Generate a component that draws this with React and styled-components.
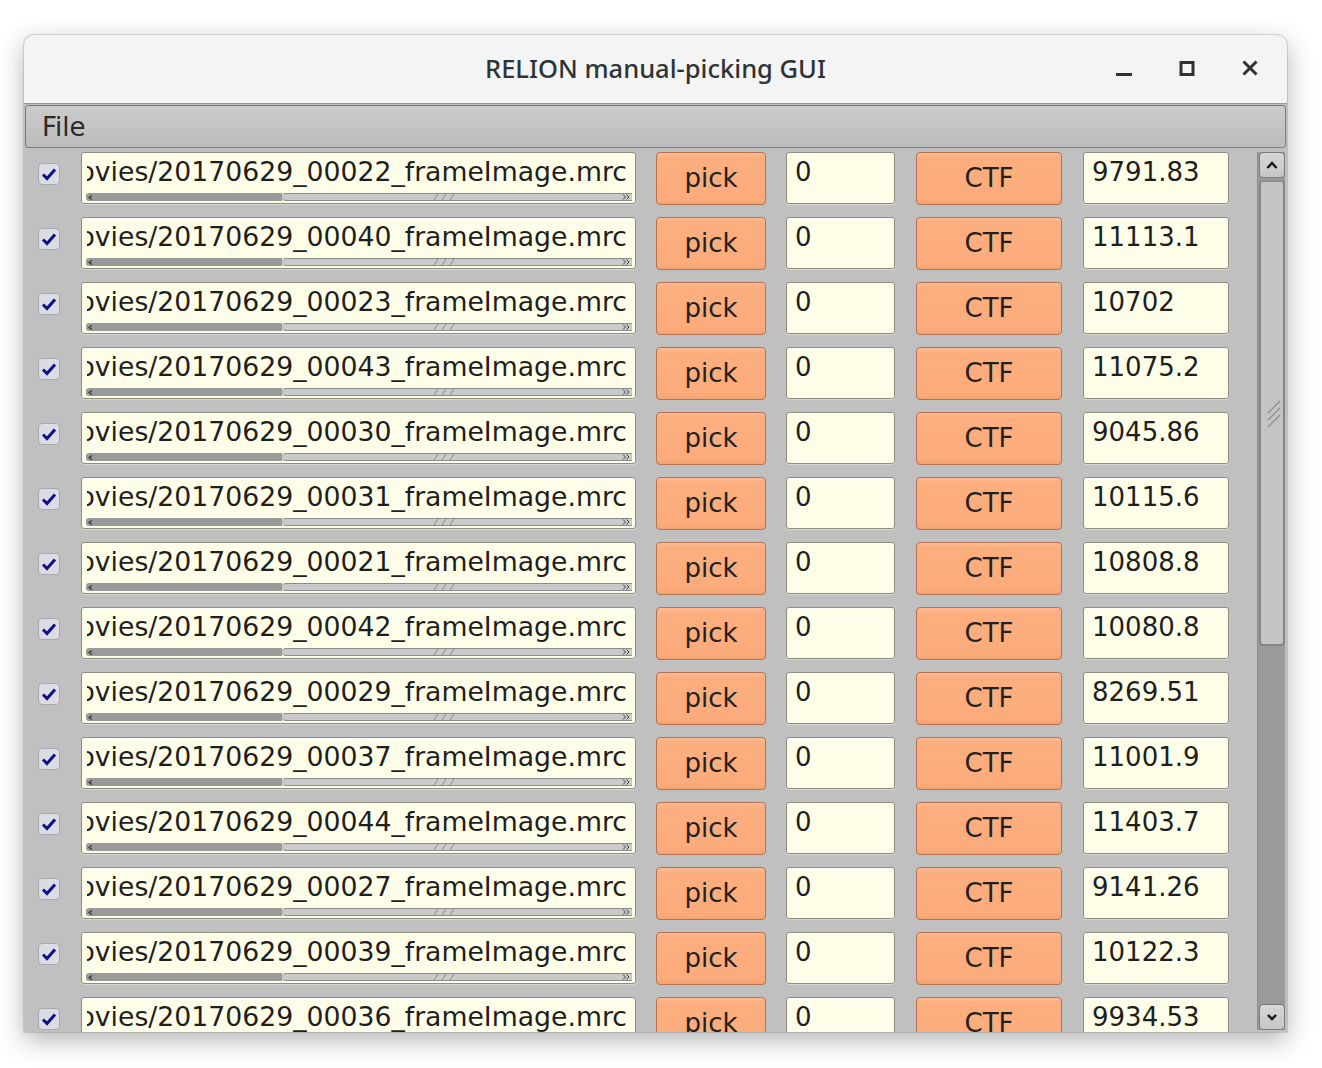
import React from 'react'
import styled, { createGlobalStyle } from 'styled-components'

const GlobalStyle = createGlobalStyle`
  html, body {
    margin: 0;
    padding: 0;
    background: #ffffff;
  }
  body {
    font-family: "DejaVu Sans", "Liberation Sans", sans-serif;
    width: 1322px;
    height: 1068px;
    overflow: hidden;
  }
`

const Window = styled.div`
  margin: 35px 0 0 24px;
  width: 1263px;
  height: 997px;
  display: flex;
  flex-direction: column;
  border-radius: 10px 10px 0 0;
  box-shadow: 0 8px 26px rgba(0, 0, 0, 0.3), 0 0 0 1px rgba(0, 0, 0, 0.12);
  overflow: hidden;
  background: #c0c0c0;
`

const TitleBar = styled.div`
  height: 68px;
  flex: none;
  background: #f4f4f4;
  border-bottom: 1px solid #9a9a9a;
  display: flex;
  align-items: center;
  justify-content: center;
  position: relative;
`

const Title = styled.div`
  font-family: "Noto Sans", "DejaVu Sans", sans-serif;
  font-weight: 500;
  font-size: 25.5px;
  color: #2e3436;
  margin-bottom: 3px;
`

const Controls = styled.div`
  position: absolute;
  right: 26px;
  top: 0;
  bottom: 0;
  display: flex;
  align-items: center;
  gap: 41px;
`

const ControlIcon = styled.svg`
  width: 22px;
  height: 22px;
  display: block;
`

const MenuBar = styled.div`
  height: 43px;
  flex: none;
  margin: 1px 1px 0;
  background: linear-gradient(#cbcbcb, #bdbdbd);
  border: 1px solid #7c7c7c;
  border-radius: 3px;
  display: flex;
  align-items: center;
  padding-left: 16px;
  box-sizing: border-box;
`

const MenuItem = styled.span`
  font-size: 26px;
  color: #2a2a2a;
`

const Body = styled.div`
  flex: 1;
  display: flex;
  overflow: hidden;
  min-height: 0;
`

const Rows = styled.div`
  flex: 1;
  display: flex;
  flex-direction: column;
  gap: 13px;
  padding: 4px 0 0 14px;
`

const Row = styled.div`
  display: flex;
  align-items: stretch;
  height: 52px;
  flex: none;
`

const Check = styled.div`
  width: 22px;
  height: 22px;
  margin-top: 11px;
  margin-right: 21px;
  box-sizing: border-box;
  border: 1px solid #a8a8b0;
  border-radius: 4px;
  background: #dcdce4;
  display: flex;
  align-items: center;
  justify-content: center;
`

const Field = styled.div`
  width: ${p => p.$w}px;
  margin-right: ${p => p.$mr}px;
  box-sizing: border-box;
  background: #fefee8;
  border: 1px solid #8e8e80;
  border-radius: 3px;
  box-shadow: inset 0 1px 0 #ffffff, 0 1px 0 #d6d6d6;
  display: flex;
  flex-direction: column;
  overflow: hidden;
`

const FieldText = styled.div`
  font-size: 26px;
  color: #1e1e1e;
  line-height: 1;
  padding: 6px 8px 0 8px;
  white-space: nowrap;
  flex: 1;
`

const PathClip = styled.div`
  flex: 1;
  margin: 6px 8px 0 5px;
  overflow: hidden;
  display: flex;
  justify-content: flex-end;
  white-space: nowrap;
  font-size: 26.7px;
  line-height: 1;
  color: #1e1e1e;
`

const HScroll = styled.div`
  height: 8px;
  margin: 0 3px 2px 4px;
  display: flex;
  align-items: stretch;
  flex: none;
`

const HThumb = styled.div`
  width: 194px;
  background: #9a9a9a;
  border-radius: 3px 0 0 3px;
  display: flex;
  align-items: center;
  padding-left: 2px;
`

const HTrack = styled.div`
  flex: 1;
  background: #cacaca;
  border-top: 1px solid #8c8c8c;
  border-bottom: 1px solid #8c8c8c;
  border-radius: 4px 0 0 4px;
  display: flex;
  align-items: center;
  justify-content: space-between;
  padding: 0 2px 0 150px;
`

const Button = styled.div`
  width: ${p => p.$w}px;
  margin-right: ${p => p.$mr}px;
  height: 53px;
  box-sizing: border-box;
  background: linear-gradient(#fdbb92 0, #fcae7e 10%, #fcac7c 90%, #f3a271 100%);
  border: 1px solid #b47253;
  border-radius: 4px;
  display: flex;
  align-items: center;
  justify-content: center;
  font-size: 26px;
  color: #222;
  padding-bottom: 2px;
`

const VScroll = styled.div`
  width: 26px;
  margin: 4px 2px 2px 0;
  display: flex;
  flex-direction: column;
  align-items: stretch;
  border-left: 1px solid #8e8e8e;
  padding-left: 1px;
  background: #9a9a9a;
`

const ArrowBtn = styled.div`
  height: 26px;
  flex: none;
  box-sizing: border-box;
  background: linear-gradient(#d6d6d6, #c6c6c6);
  border: 1px solid #7a7a7a;
  border-radius: 4px;
  display: flex;
  align-items: center;
  justify-content: center;
`

const VThumb = styled.div`
  height: 466px;
  margin-top: 2px;
  flex: none;
  box-sizing: border-box;
  background: #c4c4c4;
  border: 2px solid #858585;
  border-top-color: #909090;
  border-radius: 4px;
  display: flex;
  align-items: center;
  justify-content: flex-end;
  padding-right: 2px;
`

const VTrack = styled.div`
  flex: 1;
`

const rows = [
  ['00022', '9791.83'],
  ['00040', '11113.1'],
  ['00023', '10702'],
  ['00043', '11075.2'],
  ['00030', '9045.86'],
  ['00031', '10115.6'],
  ['00021', '10808.8'],
  ['00042', '10080.8'],
  ['00029', '8269.51'],
  ['00037', '11001.9'],
  ['00044', '11403.7'],
  ['00027', '9141.26'],
  ['00039', '10122.3'],
  ['00036', '9934.53'],
]

const CheckMark = () => (
  <svg width="16" height="14" viewBox="0 0 16 14">
    <path d="M2 7.5 L6 11.5 L14 2.5" fill="none" stroke="#10108c" strokeWidth="3" strokeLinejoin="miter" />
  </svg>
)

const Grip = ({ vertical }) => (
  <svg width={vertical ? 14 : 26} height={vertical ? 40 : 6} viewBox={vertical ? '0 0 14 40' : '0 0 26 6'}>
    {vertical ? (
      <g stroke="#8a8a8a" strokeWidth="1.2">
        <path d="M1 20 L13 8" />
        <path d="M1 27 L13 15" />
        <path d="M1 34 L13 22" />
      </g>
    ) : (
      <g stroke="#8a8a8a" strokeWidth="1">
        <path d="M2 6 L6 0" />
        <path d="M10 6 L14 0" />
        <path d="M18 6 L22 0" />
      </g>
    )}
  </svg>
)

const FileRow = ({ id, value }) => (
  <Row>
    <Check>
      <CheckMark />
    </Check>
    <Field $w={555} $mr={20}>
      <PathClip>
        <span>{`movies/20170629_${id}_frameImage.mrc`}</span>
      </PathClip>
      <HScroll>
        <HThumb>
          <svg width="5" height="5" viewBox="0 0 5 5">
            <path d="M4 0.5 L1 2.5 L4 4.5" fill="none" stroke="#333" strokeWidth="1.2" />
          </svg>
        </HThumb>
        <HTrack>
          <Grip />
          <svg width="8" height="6" viewBox="0 0 8 6">
            <path d="M1 0.5 L3.5 3 L1 5.5 M4.5 0.5 L7 3 L4.5 5.5" fill="none" stroke="#444" strokeWidth="1" />
          </svg>
        </HTrack>
      </HScroll>
    </Field>
    <Button $w={110} $mr={20}>pick</Button>
    <Field $w={109} $mr={21}>
      <FieldText>0</FieldText>
    </Field>
    <Button $w={146} $mr={21}>CTF</Button>
    <Field $w={146} $mr={0}>
      <FieldText>{value}</FieldText>
    </Field>
  </Row>
)

export default function App() {
  return (
    <>
      <GlobalStyle />
      <Window>
        <TitleBar>
          <Title>RELION manual-picking GUI</Title>
          <Controls>
            <ControlIcon viewBox="0 0 22 22">
              <rect x="3" y="15" width="16" height="3" fill="#2e3436" />
            </ControlIcon>
            <ControlIcon viewBox="0 0 22 22">
              <rect x="5" y="4.5" width="12" height="12" fill="none" stroke="#2e3436" strokeWidth="3" />
            </ControlIcon>
            <ControlIcon viewBox="0 0 22 22">
              <path d="M4.5 3.5 L17.5 16.5 M17.5 3.5 L4.5 16.5" stroke="#2e3436" strokeWidth="3" />
            </ControlIcon>
          </Controls>
        </TitleBar>
        <MenuBar>
          <MenuItem>File</MenuItem>
        </MenuBar>
        <Body>
          <Rows>
            {rows.map(([id, v]) => (
              <FileRow key={id} id={id} value={v} />
            ))}
          </Rows>
          <VScroll>
            <ArrowBtn>
              <svg width="12" height="8" viewBox="0 0 12 8">
                <path d="M1.5 7 L6 2 L10.5 7" fill="none" stroke="#111" strokeWidth="2.4" />
              </svg>
            </ArrowBtn>
            <VThumb>
              <Grip vertical />
            </VThumb>
            <VTrack />
            <ArrowBtn>
              <svg width="12" height="8" viewBox="0 0 12 8">
                <path d="M2 2 L6 6 L10 2" fill="none" stroke="#111" strokeWidth="2.4" />
              </svg>
            </ArrowBtn>
          </VScroll>
        </Body>
      </Window>
    </>
  )
}
